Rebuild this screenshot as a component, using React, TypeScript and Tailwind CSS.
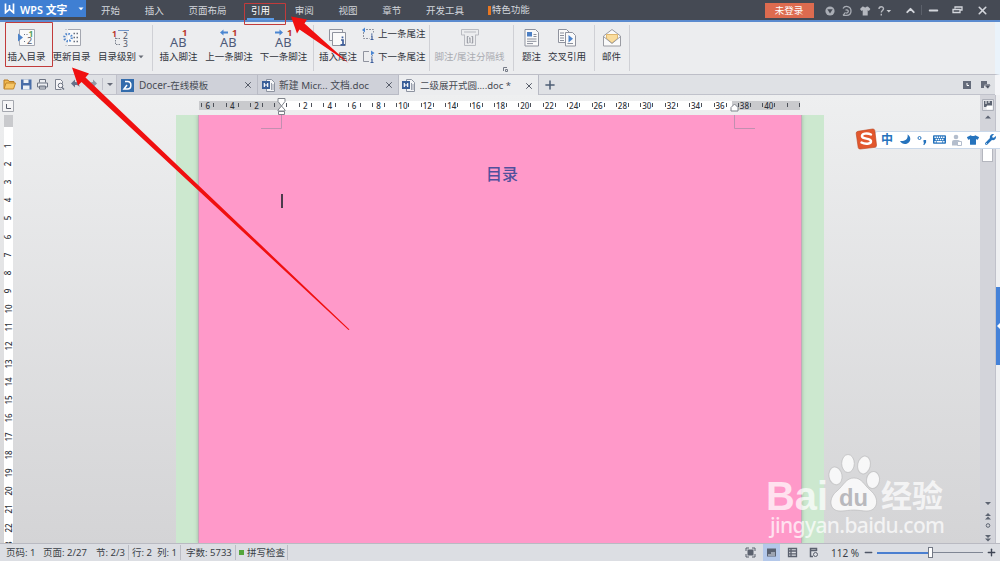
import React from "react";
import { ChevronUp, Minus, Plus, X } from "lucide-react";
import { FaMoon, FaTshirt, FaWrench, FaKeyboard } from "react-icons/fa";

const menuLeft = ["开始", "插入", "页面布局", "引用", "审阅", "视图", "章节", "开发工具"];

const rulerMarks = Array.from({ length: 25 }, (_, i) => (i - 3) * 2);
const sideMarks = Array.from({ length: 23 }, (_, i) => i + 1);

const Caret = ({ className = "" }: { className?: string }) => (
  <svg className={className} width="6" height="4" viewBox="0 0 6 4">
    <path d="M0.5 0.5h5L3 3.3z" fill="currentColor" />
  </svg>
);

const TitleBar = () => (
  <header className="flex h-[22px] shrink-0 items-start border-b-2 border-[#5b8bcf] bg-[#454a54] text-[#d3d6dc]">
    <div className="flex h-[17px] w-[86px] items-center bg-[#3f7fd3] text-white">
      <svg className="ml-1" width="12" height="11" viewBox="0 0 12 11" fill="none" stroke="#fff" strokeWidth="1.7">
        <path d="M1.5 0.5v9.2l4-3.5 4 3.5V0.5M5.5 2v4" />
      </svg>
      <span className="ml-1 w-[50px] whitespace-nowrap pt-[2px] text-[10.800px] font-semibold leading-[17px]">WPS 文字</span>
      <Caret className="ml-2" />
    </div>
    <nav className="flex h-5 items-center gap-[24.700px] pl-[15px]">
      {menuLeft.map((name) => (
        <span
          key={name}
          className={
            name === "引用"
              ? "-mx-1 h-5 border-b-2 border-[#5b9be6] px-1 leading-[21px] text-white"
              : "h-5 leading-[22px]"
          }
        >
          {name}
        </span>
      ))}
      <span className="-ml-[1px] flex h-5 items-center gap-[1px] leading-[22px]">
        <i className="h-[9px] w-[3px] bg-[#e87722]" />
        特色功能
      </span>
    </nav>
    <div className="ml-auto flex h-5 items-center">
      <span className="mr-[11px] h-[15px] w-[49px] bg-[#dd6b4f] text-center leading-[16px] text-white">未登录</span>
      <svg className="mt-[1px]" width="70" height="14" viewBox="0 0 70 14">
        <circle cx="5" cy="7" r="4.600" fill="#a9adb5" />
        <path d="M2.300 5.200h5.400L5 9.600z" fill="#454a54" />
        <path d="M18 4.500c2-3.500 8-2.300 8 2.500 0 3-2 4.300-4.500 4.300H18M20.500 6.200c1.500-.8 3 .2 2.800 1.500-.2 1.200-1.300 1.500-2.300 1.500M18 11.300l2.500-3" fill="none" stroke="#a9adb5" strokeWidth="1.300" />
        <path d="M37.500 2.500 35 5l1.500 2 1.200-.8V11.500h5V6.200l1.200.8 1.500-2-2.500-2.500-1.500.2c-.5 1-2 1-2.500 0z" fill="#b5b8bf" />
        <path d="M54 5c0-3 4.500-3 4.500-.2 0 1.800-2.200 1.800-2.200 3.800M56.300 9.800v1.700" fill="none" stroke="#b5b8bf" strokeWidth="1.400" />
        <path d="M61.500 6h4.600l-2.300 2.600z" fill="#c8cbd0" />
      </svg>
      <ChevronUp className="ml-[9px]" size={13} strokeWidth={3.500} />
      <i className="ml-1 h-[10px] w-px bg-[#5c616b]" />
      <Minus className="ml-[5px]" size={13} strokeWidth={3.500} />
      <svg className="ml-[12px]" width="11" height="8" viewBox="0 0 11 8" fill="none" stroke="currentColor" strokeWidth="1.300">
        <path d="M3 2.500V1h7v3H8M1 3.500h7v3H1z" />
      </svg>
      <X className="ml-[13px] mr-[11.500px]" size={13} strokeWidth={3} />
    </div>
  </header>
);

const AbIcon = ({ arrow }: { arrow?: "left" | "right" }) => (
  <svg width="24" height="20" viewBox="0 0 24 20">
    <text x="3" y="18.500" fontSize="12.500" textLength="16.500" lengthAdjust="spacingAndGlyphs" fill="#4e5a78" className="font-['Noto_Sans']">AB</text>
    <text x="15" y="8" fontSize="9.500" fill="#b8382c" className="font-bold">1</text>
    {arrow === "left" && <path d="M3 4.500L6.500 1.500v2H11v2H6.500v2z" fill="#4a86d2" />}
    {arrow === "right" && <path d="M11 4.500L7.500 1.500v2H3v2h4.500v2z" fill="#4a86d2" />}
  </svg>
);

const InsertTocIcon = () => (
  <svg width="20" height="20" viewBox="0 0 20 20">
    <path d="M2.500 1.500h15v16h-15z" fill="#fafafa" stroke="#a4a7b0" />
    <path d="M1 5.500l5 4L1 13.500z" fill="#4c83cb" />
    <text x="11.500" y="8.500" fontSize="8.500" fill="#5ba25a" className="font-bold">1</text>
    <text x="10" y="16.300" fontSize="9" fill="#4f5769">2</text>
    <path d="M7 6.500h1M9.500 6.500h1M7 13.500h1" stroke="#6c7280" />
  </svg>
);

const RefreshTocIcon = () => (
  <svg width="20" height="20" viewBox="0 0 20 20">
    <path d="M6 1.500h12.500v16H6M3.500 1.500h1M3.500 17.500h1" fill="#fafafa" stroke="#a4a7b0" />
    <circle cx="6" cy="9.500" r="3.700" fill="none" stroke="#4c83cb" strokeWidth="2.200" strokeDasharray="1.400 1.500" />
    <path d="M11.500 5.500H13M14.500 5.500H16M11.500 9.500H13M14.500 9.500H16M11.500 13.500H13M14.500 13.500H16" stroke="#68707f" strokeWidth="1.300" />
  </svg>
);

const LevelIcon = () => (
  <svg width="20" height="20" viewBox="0 0 20 20">
    <text x="1" y="8.500" fontSize="8.500" fill="#b8382c" className="font-bold">1</text>
    <path d="M7 2.500h11" stroke="#7094c8" />
    <text x="12" y="10.800" fontSize="8.500" fill="#4f5769">2</text>
    <text x="12" y="19" fontSize="8.500" fill="#4f5769">3</text>
    <path d="M4.500 9.500V17M5 10.500h5M5 16.500h5" fill="none" stroke="#7d838f" strokeDasharray="1.500 1" />
  </svg>
);

const EndnoteIcon = () => (
  <svg width="20" height="20" viewBox="0 0 20 20">
    <path d="M1.500 1.500h13v11h-13z" fill="#f5f5f7" stroke="#8f939e" />
    <path d="M4.500 4.500h13v13h-13z" fill="#fafafa" stroke="#8f939e" />
    <path d="M14.500 8.500v1.800M13 12h2v4.500M12.500 16.800h4.500" fill="none" stroke="#3f5f9b" strokeWidth="1.700" />
  </svg>
);

const SmallNoteIcon = ({ up }: { up?: boolean }) => (
  <svg className="shrink-0" width="13" height="14" viewBox="0 0 13 14">
    <path d={up ? "M4 2.500h7.500v3M1.500 5v6.500h6" : "M7 1.500H1.500v10H7M10.500 6v-1"} fill="none" stroke="#8f939e" strokeDasharray={up ? "2 1" : undefined} />
    <path d={up ? "M0 3l3-2.500v5z" : "M9 .5l3.500 2.500L9 5.500z"} fill="#4a86d2" />
    <path d="M9.800 6.500v1.300M9 9h1v3.500M8.500 12.500h3" fill="none" stroke="#3f5f9b" strokeWidth="1.200" />
  </svg>
);

const SeparatorIcon = () => (
  <svg width="20" height="20" viewBox="0 0 20 20" fill="none" stroke="#b9bbc1">
    <path d="M1.500 7V1.500h17V7H16M4 7H1.500M4.500 6.500v11h11v-11M4 4h12" />
    <path d="M8.500 8.500H7.300v6.500h1.200M11.500 8.500h1.200v6.500h-1.200M9 10.500l1-.8V15" stroke="#8f929b" />
  </svg>
);

const CaptionIcon = () => (
  <svg width="18" height="20" viewBox="0 0 18 20">
    <path d="M2 1.500h10.500l3 3v13.500H2z" fill="#fafafa" stroke="#8f939e" />
    <path d="M4 4h5v4.500H4z" fill="#4c7fc4" />
    <path d="M10.500 6.500h3M10.500 8.500h3M4 11h9.500M4 13.300h9.500M4 15.600h6" stroke="#8a8f9b" />
  </svg>
);

const CrossRefIcon = () => (
  <svg width="20" height="20" viewBox="0 0 20 20">
    <path d="M1.500 1.500h8l2.500 2.500v10.500H1.500z" fill="#fafafa" stroke="#8f939e" />
    <path d="M8.500 4.500h7l3 3V18h-10z" fill="#fafafa" stroke="#8f939e" />
    <path d="M3 5h4M3 7.500h4M3 10h4M3 12.500h4M10.500 15.500h5.500" stroke="#8a8f9b" />
    <path d="M11.500 7l4.500 3.700-4.500 3.700z" fill="#4c83cb" />
  </svg>
);

const MailIcon = () => (
  <svg width="20" height="20" viewBox="0 0 20 20">
    <path d="M1.500 8L10 1.500 18.500 8v10h-17z" fill="#fafafa" stroke="#9a9ca3" />
    <path d="M4.500 6.500h11v4L10 15l-5.500-4.500z" fill="#f9dc9d" stroke="#d8a955" strokeWidth=".8" />
    <path d="M1.500 8.500L10 15.500l8.500-7" fill="none" stroke="#9a9ca3" />
  </svg>
);

const RibbonButton = ({ icon, label, className, muted }: {
  icon: React.ReactNode;
  label: React.ReactNode;
  className: string;
  muted?: boolean;
}) => (
  <div className={`flex shrink-0 flex-col items-center whitespace-nowrap pt-[6px] ${className} ${muted ? "text-[#a9abb1]" : "text-[#30343c]"}`}>
    {icon}
    <span className="mt-[2px] leading-[14px]">{label}</span>
  </div>
);

const Divider = () => <i className="mt-[3px] h-[46px] w-px shrink-0 bg-[#cfd0d5]" />;

const Ribbon = () => (
  <section className="flex h-[53px] shrink-0 border-b border-[#bdbec7] border-r-[5px] border-r-[#eaf3fb] bg-[#ecedef] pl-[4px]">
    <RibbonButton className="w-[45px]" icon={<InsertTocIcon />} label="插入目录" />
    <RibbonButton className="w-[45px]" icon={<RefreshTocIcon />} label="更新目录" />
    <RibbonButton
      className="mr-[4px] w-[54px]"
      icon={<LevelIcon />}
      label={<span className="flex items-center gap-[2px]">目录级别<Caret className="text-[#666b75]" /></span>}
    />
    <Divider />
    <RibbonButton className="w-[51px]" icon={<AbIcon />} label="插入脚注" />
    <RibbonButton className="w-[50px]" icon={<AbIcon arrow="left" />} label="上一条脚注" />
    <RibbonButton className="w-[59px]" icon={<AbIcon arrow="right" />} label="下一条脚注" />
    <Divider />
    <RibbonButton className="w-[48px]" icon={<EndnoteIcon />} label="插入尾注" />
    <div className="flex w-[67px] flex-col gap-[9px] whitespace-nowrap pt-[5px] text-[#30343c]">
      <span className="flex h-[14px] items-center gap-[3px]"><SmallNoteIcon up />上一条尾注</span>
      <span className="flex h-[14px] items-center gap-[3px]"><SmallNoteIcon />下一条尾注</span>
    </div>
    <Divider />
    <div className="flex">
      <RibbonButton className="w-[79px]" icon={<SeparatorIcon />} label="脚注/尾注分隔线" muted />
      <svg className="-ml-[6px] mt-[45px]" width="6" height="6" viewBox="0 0 6 6" fill="none" stroke="#777c88">
        <path d="M.5 4V.5H4M2.500 2.500h2v2h-2z" />
      </svg>
    </div>
    <i className="w-[4px]" />
    <Divider />
    <RibbonButton className="w-[35px]" icon={<CaptionIcon />} label="题注" />
    <RibbonButton className="w-[36px]" icon={<CrossRefIcon />} label="交叉引用" />
    <i className="w-[9px]" />
    <Divider />
    <RibbonButton className="w-[33px]" icon={<MailIcon />} label="邮件" />
    <i className="w-[1px]" />
    <Divider />
  </section>
);

const WordIcon = () => (
  <svg className="shrink-0" width="13" height="13" viewBox="0 0 13 13">
    <path d="M4.500.5h5l3 3v9h-8z" fill="#f4f5f7" stroke="#8d93a0" />
    <path d="M9.500 4v7M11 5v6" stroke="#9aa0ad" />
    <path d="M0 2h8v8H0z" fill="#3a5f98" />
    <path d="M2.300 4v4M5.700 4v4M2.300 6h3.400" stroke="#fff" strokeWidth="1.200" />
  </svg>
);

const QuickAccess = () => (
  <svg className="shrink-0" width="117" height="19" viewBox="0 0 117 19" fill="none">
    <path d="M4 13.500V5h4l1 1.500h5v2" fill="#f0b84e" stroke="#b87a20" />
    <path d="M4 14l2-6h9.500l-2 6z" fill="#f7c665" stroke="#c0852b" />
    <path d="M21 4.500h10.500v10H21z" fill="#4a6ea8" />
    <path d="M23.500 4.500h5V8h-5zM23 10.500h6.500v4H23z" fill="#eef1f6" />
    <path d="M39.500 7.500V4.500h6v3M37.500 8h10v4h-10zM39.500 11h6v3h-6z" stroke="#6d7483" fill="#eceef2" />
    <path d="M61.500 14.500h-6v-10h5l2 2v2" stroke="#7c828f" fill="#f5f5f7" />
    <circle cx="60.500" cy="10.500" r="2.300" stroke="#69707f" />
    <path d="M62 12.500l2 2" stroke="#69707f" strokeWidth="1.500" />
    <path d="M71 8.500l4-4V7c3 0 4.500 2 4.500 5-1-1.700-2.500-2-4.500-2v2.500z" fill="#66718a" />
    <path d="M97 8.500l-4-4V7c-3 0-4.500 2-4.500 5 1-1.700 2.500-2 4.500-2v2.500z" fill="#9298a5" />
    <path d="M102.500 3v12M116.500 0v19" stroke="#c0c1ca" />
    <path d="M107 8h6l-3 3z" fill="#666b78" />
  </svg>
);

const TabClose = () => <X className="ml-auto shrink-0 text-[#555b68]" size={10} strokeWidth={2.400} />;

const TabBar = () => (
  <div className="flex h-5 shrink-0 whitespace-nowrap border-r-[5px] border-r-[#f4f5f8] bg-[#dfe1e5] text-[#474b54]">
    <div className="border-b border-[#c0c2cb]"><QuickAccess /></div>
    <div className="flex w-[140px] shrink-0 items-center border-b border-[#c0c2cb] bg-[#cfd1d9] pl-1 pr-[4px] pt-[1px]">
      <svg width="13" height="13" viewBox="0 0 13 13">
        <path d="M0 0h13v13H0z" fill="#336cac" />
        <path d="M4 2.500h2.500c4.500 0 4.500 7.500 0 7.500H3l3-4" fill="none" stroke="#fff" strokeWidth="1.500" />
      </svg>
      <span className="ml-[5px] pt-[1px] text-[10px]">Docer-<span className="text-[9.500px]">在线模板</span></span>
      <TabClose />
    </div>
    <div className="flex w-[141px] shrink-0 items-center border-b border-l border-[#b9bbc5] bg-[#cfd1d9] pl-1 pr-[4px] pt-[1px]">
      <WordIcon />
      <span className="ml-[4px] pt-[1px] text-[9.800px]">新建 Micr... 文档.doc</span>
      <TabClose />
    </div>
    <div className="flex w-[141px] shrink-0 items-center border-x border-[#b9bbc5] bg-[#ecedef] pl-[3px] pr-[4px] pt-[1px]">
      <WordIcon />
      <span className="ml-[5px] pt-[1px] text-[9.500px]">二级展开式圆....doc *</span>
      <TabClose />
    </div>
    <div className="flex flex-1 items-center border-b border-[#c0c2cb] pl-1 pt-[1px]">
      <Plus className="text-[#4d5d74]" size={14} strokeWidth={2.600} />
      <svg className="ml-auto mr-[3px]" width="30" height="10" viewBox="0 0 30 10">
        <path d="M1 1h8v8H1z" fill="#646b7a" />
        <path d="M5 3v2.500h2" fill="none" stroke="#fff" />
        <path d="M19 1h6v3h3v1l-3 3-2-2h-1v2h-3z" fill="#666c7a" />
        <path d="M22.500 5h6.500l-3.200 4z" fill="#4f5563" stroke="#dfe1e5" strokeWidth=".6" />
      </svg>
    </div>
  </div>
);

const Ruler = () => (
  <div className="relative ml-[183px] h-[9px] w-[601px]">
    <div className="flex h-[9px] overflow-hidden bg-gradient-to-r from-[#c9cacd] from-[82px] via-white via-[82px] to-white">
      <div className="-ml-[3.400px] flex">
        {rulerMarks.map((mark) => (
          <div key={mark} className={`flex h-[9px] w-[24.400px] shrink-0 justify-center ${mark > 36 ? "bg-[#c9cacd]" : ""}`}>
            <div className="flex w-[13px] items-center justify-between">
              <i className="h-1 w-px shrink-0 bg-[#4d5159]" />
              <span className="flex w-0 justify-center text-[8px] font-medium leading-[9px] text-[#30343c]">
                {mark === 0 || mark > 40 ? "" : Math.abs(mark)}
              </span>
              <i className="h-1 w-px shrink-0 bg-[#4d5159]" />
            </div>
          </div>
        ))}
      </div>
    </div>
    <svg className="absolute -top-[3px] left-[78px]" width="9" height="18" viewBox="0 0 9 18" fill="#fff" stroke="#7f838b">
      <path d="M1 .5h7v3L4.500 8 8 12v1H1v-1L4.500 8 1 3.500zM1.500 13.500h6v3h-6z" />
    </svg>
    <svg className="absolute left-[531px] top-[2px]" width="9" height="9" viewBox="0 0 9 9" fill="#fff" stroke="#7f838b">
      <path d="M1 8V4.500L4.500 1 8 4.500V8z" />
    </svg>
  </div>
);

const SideRuler = () => (
  <div className="ml-1 flex h-[428px] w-[9px] shrink-0 flex-col bg-white">
    <div className="h-[12px] shrink-0 bg-[#c9cacd]" />
    <div className="h-[9.500px] shrink-0" />
    {sideMarks.map((mark) => (
      <div key={mark} className="flex h-[18.200px] shrink-0 items-center justify-center">
        <span className="-rotate-90 text-[8px] font-medium leading-none text-[#30343c]">{mark}</span>
      </div>
    ))}
  </div>
);

const Page = () => (
  <div className="ml-[163px] flex h-[428px] w-[648px] bg-[#cce8cf] pl-[22px] pr-[22px]">
    <div className="relative flex-1 border-x border-x-[#c2aab8] bg-[#ff99c9] shadow-[0_0_4px_rgba(90,110,90,0.4)] [clip-path:inset(0_-6px)]">
      <svg className="absolute left-0 top-0" width="560" height="16" fill="none" stroke="#c18fb0">
        <path d="M82.500 0v13.500H62M535.500 0v13.500H556" />
      </svg>
      <h1 className="pl-[287px] pt-[47px] text-[16px] font-medium leading-6 text-[#50509c]">目录</h1>
      <div className="ml-[82px] mt-[8px] h-[14px] w-[2px] bg-[#4b3b4b]" />
    </div>
  </div>
);

const ScrollColumn = () => (
  <div className="flex w-[16px] shrink-0 flex-col items-center border-r border-[#c0c1ca] bg-[#d3d4da] pt-[3px]">
    <svg width="14" height="22" viewBox="0 0 14 22">
      <path d="M1.500 1.500h11v11h-11z" fill="#e3e4e8" stroke="#adb0b9" />
      <path d="M3 3h8v6H3z" fill="#5d6472" />
      <path d="M5 3v3M8 3v2M6 8h5v3H6z" stroke="#fff" fill="#fff" />
      <path d="M4 20.500l3-3 3 3z" fill="#5d6472" />
    </svg>
    <div className="mt-[28px] h-[14px] w-[11px] border border-[#b4b6be] bg-white" />
    <svg className="mt-auto" width="10" height="42" viewBox="0 0 10 42" fill="#5d6472">
      <path d="M2 1h6L5 4zM2 15l3-3 3 3zM2 18.500l3-3 3 3zM2 34h6l-3 3zM2 37.500h6l-3 3z" />
      <circle cx="5" cy="24.500" r="1.800" fill="none" stroke="#5d6472" />
    </svg>
  </div>
);

const Workspace = () => (
  <main className="flex h-[448px] shrink-0 overflow-hidden">
    <div className="flex-1 bg-gradient-to-b from-[#eeeff0] to-[#d4d4d6]">
      <div className="flex h-5 items-center pl-[2px]">
        <svg width="14" height="13" viewBox="0 0 14 13" fill="none">
          <path d="M.5 1.500h11v11H.5z" fill="#f5f5f6" stroke="#a5a8af" />
          <path d="M4.500 5v4.500H9" stroke="#555b68" />
        </svg>
        <Ruler />
      </div>
      <div className="flex">
        <SideRuler />
        <Page />
      </div>
    </div>
    <ScrollColumn />
    <aside className="w-1 shrink-0 bg-[#eff0f2] pt-[192px]">
      <div className="flex h-[78px] items-center justify-end bg-[#4582d8]">
        <svg width="3" height="6" viewBox="0 0 3 6"><path d="M3 0v6L0 3z" fill="#fff" /></svg>
      </div>
    </aside>
  </main>
);

const StatusBar = () => (
  <footer className="relative flex h-[18px] shrink-0 items-center whitespace-nowrap border-t border-[#b9bac2] bg-[#dcdee3] pl-[6px] text-[#3a3e46]">
    <span className="w-[37px]">页码: 1</span>
    <span className="w-[53px]">页面: 2/27</span>
    <span className="w-[32px]">节: 2/3</span>
    <i className="h-[15px] w-px bg-[#bbbdc5]" />
    <span className="w-[25px] pl-[3px]">行: 2</span>
    <span className="w-[26px] pl-[3px]">列: 1</span>
    <i className="h-[15px] w-px bg-[#bbbdc5]" />
    <span className="w-[54px] pl-[5px]">字数: 5733</span>
    <i className="h-[15px] w-px bg-[#bbbdc5]" />
    <i className="ml-[3px] mr-[3px] h-[5px] w-[5px] bg-[#55a63b]" />
    <span className="w-[40px]">拼写检查</span>
    <i className="h-[15px] w-px bg-[#bbbdc5]" />
    <div className="ml-auto flex items-center">
      <svg width="76" height="17" viewBox="0 0 76 17" fill="none">
        <path d="M18 0h17v17H18z" fill="#b4c8ea" />
        <path d="M1 7V4h3M7 4h3v3M10 10v3H7M4 13H1v-3" stroke="#5a606d" />
        <path d="M2.500 5.500h6v6h-6z" fill="#5a606d" />
        <path d="M22 4.500h9v8h-9z" fill="#5a6272" />
        <path d="M26 9h4M23 11h7" stroke="#dfe6f2" />
        <path d="M43.500 4.500h8v8h-8zM43.500 7h8M43.500 9.800h8M46 4.500v8" stroke="#5a606d" strokeWidth="1.300" />
        <path d="M68 12.500h-2.500v-8h6V7M65.500 6.500h6" stroke="#5a606d" strokeWidth="1.500" />
        <circle cx="70.500" cy="10.500" r="2" stroke="#5a606d" />
      </svg>
      <span className="ml-[10px] w-[30px] text-[10px]">112 %</span>
      <Minus className="ml-[2px] text-[#4f5767]" size={11} strokeWidth={3} />
      <div className="ml-[3px] flex w-[106px] items-center">
        <i className="h-[2px] w-[51px] bg-[#4a7fd0]" />
        <i className="h-[11px] w-[5px] border border-[#737985] bg-white" />
        <i className="h-px flex-1 bg-[#7f8694]" />
      </div>
      <Plus className="ml-[3px] mr-[3px] text-[#3f4654]" size={11} strokeWidth={3} />
    </div>
  </footer>
);

const ImeBar = () => (
  <div className="absolute left-[855px] top-[128px] flex h-[22px] w-[145px] items-center">
    <svg className="z-10 shrink-0" width="23" height="22" viewBox="0 0 23 22">
      <path d="M3 3.300L17.500 1q2-.2 2.300 1.500L21.500 17q.2 2-1.500 2.300L5.500 21q-2 .2-2.300-1.500L1.200 5.500Q1 3.600 3 3.300z" fill="#e2572d" stroke="#b9431f" strokeWidth=".6" />
      <path d="M16 6.500C12 4.500 6.500 5.500 7 8.500c.5 2.800 8.500 1.500 9 4.500.3 3.200-6 3.500-9.500 1.500" fill="none" stroke="#fff" strokeWidth="2.400" strokeLinecap="round" />
    </svg>
    <div className="-ml-1 mt-[1px] flex h-[18px] flex-1 items-center rounded-l border border-r-0 border-[#c9d8ea] bg-white text-[#2573bd]">
      <span className="ml-[6px] w-[12px] text-[12px] font-bold leading-[16px]">中</span>
      <svg className="ml-[6px]" width="12" height="11" viewBox="0 0 12 11">
        <path d="M8.500.5c1 4-2 7-7.500 6.500 2.500 5 10 3.500 10.300-2C11.300 3 10 1.300 8.500.5z" fill="currentColor" />
      </svg>
      <svg className="ml-[6px]" width="11" height="12" viewBox="0 0 11 12">
        <circle cx="2.500" cy="4" r="1.500" fill="none" stroke="currentColor" />
        <path d="M6.500 6h2.600v2.500L7.300 11h-1l.8-2.500h-.6z" fill="currentColor" />
      </svg>
      <FaKeyboard className="ml-[5px]" size={13} />
      <svg className="ml-[5px]" width="12" height="12" viewBox="0 0 12 12" fill="#b3bdcc">
        <circle cx="5" cy="3" r="2.300" />
        <path d="M1 11.500V8q0-2 2-2h4q2 0 2 2v3.500z" />
        <path d="M6.500 7.500h4v4h-4z" fill="#fff" stroke="#b3bdcc" />
      </svg>
      <FaTshirt className="ml-[4px]" size={12} />
      <FaWrench className="ml-[6px]" size={11} />
    </div>
  </div>
);

const Watermark = () => (
  <svg className="absolute left-[760px] top-[448px]" width="200" height="95" viewBox="0 0 200 95" fill="#fff" fillOpacity=".72">
    <text x="6" y="62" fontSize="40" textLength="62" lengthAdjust="spacingAndGlyphs" className="font-['Liberation_Sans'] font-bold">Bai</text>
    <g fillOpacity=".8" stroke="#b5b5b8" strokeOpacity=".6">
      <ellipse cx="75.500" cy="28" rx="6.500" ry="9" transform="rotate(-10 75 28)" />
      <ellipse cx="88" cy="15.500" rx="6.300" ry="9" />
      <ellipse cx="104" cy="17" rx="6.300" ry="9" transform="rotate(12 104 17)" />
      <ellipse cx="113" cy="32" rx="6.500" ry="8.500" transform="rotate(8 113 32)" />
      <path d="M94 30c8 0 10 7 16 12 11 9 7 21-3 21-6 0-8-1-13-1s-8 1-14 1c-11 0-12-13-3-20 7-6 9-13 17-13z" />
    </g>
    <text x="79" y="57.500" fontSize="24" textLength="29" lengthAdjust="spacingAndGlyphs" fill="#b9b9bd" fillOpacity="1" className="font-['Liberation_Sans'] font-bold">du</text>
    <text x="121" y="59" fontSize="31" textLength="62" className="font-['Noto_Sans_CJK_SC'] font-bold">经验</text>
    <text x="10" y="85" fontSize="21" textLength="175" className="font-['Noto_Sans'] font-medium">jingyan.baidu.com</text>
  </svg>
);

// red boxes and arrows pointing at the tab and the button to click
const Annotations = () => (
  <svg className="pointer-events-none absolute left-0 top-0" width="1000" height="561">
    <path d="M5.500 22.500h47v44h-47zM244.500 3.500h41v21h-41z" fill="none" stroke="#c23b3b" />
    <path d="M72 67.500L89 73.500 85.500 77.500 349.500 329.500 348.500 330 81.500 82 78 85.500z" fill="#f01010" />
    <path d="M291 16.500L307 19.500 304.500 23.500 348.500 63 299.500 29.500 297 33.500z" fill="#f01010" />
  </svg>
);

export default function App() {
  return (
    <div className="relative flex h-[561px] w-[1000px] flex-col overflow-hidden bg-[#ecedef] font-['Noto_Sans','Noto_Sans_CJK_SC',sans-serif] text-[9.500px] leading-[14px]">
      <TitleBar />
      <Ribbon />
      <TabBar />
      <Workspace />
      <StatusBar />
      <ImeBar />
      <Watermark />
      <Annotations />
    </div>
  );
}
